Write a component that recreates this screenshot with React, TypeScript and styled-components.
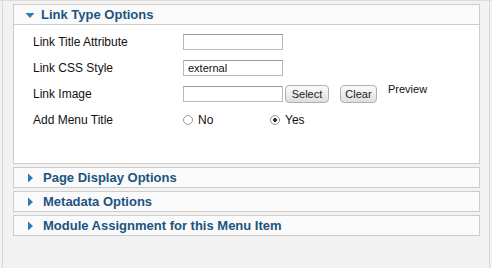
import * as React from 'react'
import styled, { createGlobalStyle } from 'styled-components'

const Global = createGlobalStyle`
body {
margin: 0;
background: #f2f2f2;
font-family: "Liberation Sans", Arial, sans-serif;
}
`

const Frame = styled.div`
width: 492px;
height: 268px;
box-sizing: border-box;
border-top: 1px solid #dcdcdc;
background: #f2f2f2;
padding-left: 2px;
`
const Sheet = styled.div`
width: 488px;
height: 267px;
box-sizing: border-box;
border-left: 1px solid #d8d8d8;
border-right: 1px solid #d8d8d8;
padding: 3px 9px 0 10px;
display: flex;
flex-direction: column;
gap: 3px;
`
const Panel = styled.div`
border: 1px solid #cccccc;
background: #fafafa;
`
const PanelHead = styled.div<{ $open?: boolean }>`
height: 19px;
display: flex;
align-items: center;
padding-left: ${p => p.$open ? 11 : 12}px;
gap: ${p => p.$open ? 6 : 7}px;
font-size: 13px;
font-weight: bold;
color: #1b5480;
border-bottom: ${p => p.$open ? '1px solid #cccccc' : 'none'};
`
const PanelBody = styled.div`
height: 138px;
background: #ffffff;
box-sizing: border-box;
padding: 4px 0 0 19px;
`
const Row = styled.div`
height: 26px;
display: flex;
align-items: center;
font-size: 12px;
color: #111;
`
const Label = styled.div`
width: 150px;
`
const TextBox = styled.div`
width: 100px;
height: 16px;
box-sizing: border-box;
border: 1px solid #b8b8b8;
border-top-color: #999;
background: #fff;
font-size: 11px;
line-height: 14px;
padding-left: 4px;
color: #111;
`
const Btn = styled.div<{ $w: number }>`
width: ${p => p.$w}px;
height: 18px;
box-sizing: border-box;
margin-left: ${p => p.$w === 44 ? 2 : 11}px;
border: 1px solid #b0b0b0;
border-radius: 4px;
background: linear-gradient(#fbfbfb, #dedede);
font-size: 11px;
display: flex;
align-items: center;
justify-content: center;
color: #222;
`
const Preview = styled.div`
margin-left: 11px;
font-size: 11px;
align-self: flex-start;
margin-top: 2px;
`
const Radio = styled.div<{ $w: number }>`
width: ${p => p.$w}px;
display: flex;
align-items: center;
gap: 5px;
font-size: 12px;
`
const Circle = styled.span<{ $on?: boolean }>`
width: 8px;
height: 8px;
border-radius: 50%;
border: 1px solid #999;
background: ${p => p.$on ? 'radial-gradient(circle, #333 0 1.6px, #fff 2.2px)' : '#fff'};
`

const Tri = ({ open }: { open?: boolean }) => (
    <svg width="10" height="10" viewBox="0 0 10 10">
        {open
            ? <polygon points="0.5,3 9.5,3 5,8" fill="#2a7db5" />
            : <polygon points="2,0.5 7,5 2,9.5" fill="#2a7db5" />}
    </svg>
)

export default function App() {
    const closed = ['Page Display Options', 'Metadata Options', 'Module Assignment for this Menu Item']
    return (
        <Frame>
            <Global />
            <Sheet>
                <Panel>
                    <PanelHead $open><Tri open />Link Type Options</PanelHead>
                    <PanelBody>
                        <Row><Label>Link Title Attribute</Label><TextBox /></Row>
                        <Row><Label>Link CSS Style</Label><TextBox>external</TextBox></Row>
                        <Row>
                            <Label>Link Image</Label><TextBox />
                            <Btn $w={44}>Select</Btn>
                            <Btn $w={37}>Clear</Btn>
                            <Preview>Preview</Preview>
                        </Row>
                        <Row>
                            <Label>Add Menu Title</Label>
                            <Radio $w={87}><Circle />No</Radio>
                            <Radio $w={60}><Circle $on />Yes</Radio>
                        </Row>
                    </PanelBody>
                </Panel>
                {closed.map((t, i) => (
                    <Panel key={i}>
                        <PanelHead><Tri />{t}</PanelHead>
                    </Panel>
                ))}
            </Sheet>
        </Frame>
    )
}
